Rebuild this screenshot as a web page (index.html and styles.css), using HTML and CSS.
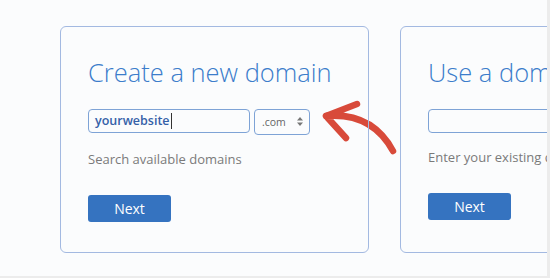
FILE: index.html
```html
<!DOCTYPE html>
<html>
<head>
<meta charset="utf-8">
<link rel="stylesheet" href="styles.css">
</head>
<body>
<div class="viewport">
  <div class="row">
    <div class="card">
      <h1 class="title">Create a new domain</h1>
      <div class="fields">
        <div class="input filled">yourwebsite<span class="caret"></span></div>
        <div class="select">.com<span class="arrows"><svg width="6" height="9" viewBox="0 0 6 9"><path d="M3 0L6 3.5H0Z M3 9L6 5.5H0Z" fill="#777"/></svg></span></div>
      </div>
      <p class="hint">Search available domains</p>
      <div class="btn">Next</div>
    </div>
    <div class="card">
      <h1 class="title">Use a domain you own</h1>
      <div class="fields">
        <div class="input wide"></div>
      </div>
      <p class="hint">Enter your existing domain name</p>
      <div class="btn">Next</div>
    </div>
  </div>
  <svg class="arrow" width="90" height="70" viewBox="310 95 90 70">
    <path d="M326 116 Q372 112 393 151 M326 116 L357 104 M326 116 L346 138" fill="none" stroke="#d84a3a" stroke-width="6.5" stroke-linecap="round" stroke-linejoin="round"/>
  </svg>
</div>
<div class="scroll"></div>
</body>
</html>
```

FILE: styles.css
```css
html, body {
  margin: 0;
  padding: 0;
  width: 550px;
  height: 278px;
  overflow: hidden;
  background: #fbfcfd;
  font-family: "Open Sans", "Liberation Sans", sans-serif;
}
.viewport {
  position: relative;
  width: 547px;
  height: 276px;
  overflow: hidden;
  border-bottom: 2px solid #ececec;
}
.scroll {
  position: absolute;
  top: 0;
  right: 0;
  width: 3px;
  height: 278px;
  background: #ececec;
}
.row {
  display: flex;
  gap: 31px;
  padding: 26px 0 0 60px;
}
.card {
  position: relative;
  z-index: 1;
  flex: 0 0 auto;
  box-sizing: border-box;
  width: 309px;
  height: 227px;
  border: 1.5px solid #a3b9e1;
  border-radius: 6px;
  padding: 0 0 0 27px;
}
.title {
  margin: 27px 0 0 0;
  font-size: 25.5px;
  line-height: 36px;
  font-weight: 300;
  color: #3c7dcb;
  white-space: nowrap;
}
.fields {
  display: flex;
  gap: 4px;
  margin-top: 18.5px;
}
.input {
  box-sizing: border-box;
  width: 162px;
  height: 24px;
  border: 1.5px solid #7ea3d6;
  border-radius: 4px;
  padding-left: 6px;
  font-size: 12.5px;
  line-height: 21px;
  font-weight: 600;
  color: #3561a8;
  display: flex;
  align-items: center;
}
.input.wide { width: 300px; }
.caret {
  display: inline-block;
  width: 1px;
  height: 16px;
  background: #333;
  margin-left: 1px;
}
.select {
  box-sizing: border-box;
  width: 56px;
  height: 26px;
  border: 1.5px solid #7ea3d6;
  border-radius: 4px;
  padding: 0 6px 0 7px;
  font-size: 10.5px;
  color: #666;
  display: flex;
  align-items: center;
  justify-content: space-between;
}
.arrows { display: flex; align-items: center; }
.hint {
  margin: 14px 0 0 0;
  font-size: 13px;
  line-height: 20px;
  color: #7a7a7a;
  white-space: nowrap;
}
.btn {
  margin-top: 26px;
  width: 83px;
  height: 27px;
  background: #3573c0;
  border-radius: 3px;
  color: #fff;
  font-size: 14px;
  line-height: 27px;
  text-align: center;
}
.arrow {
  position: absolute;
  left: 310px;
  top: 95px;
  z-index: 0;
}
```
